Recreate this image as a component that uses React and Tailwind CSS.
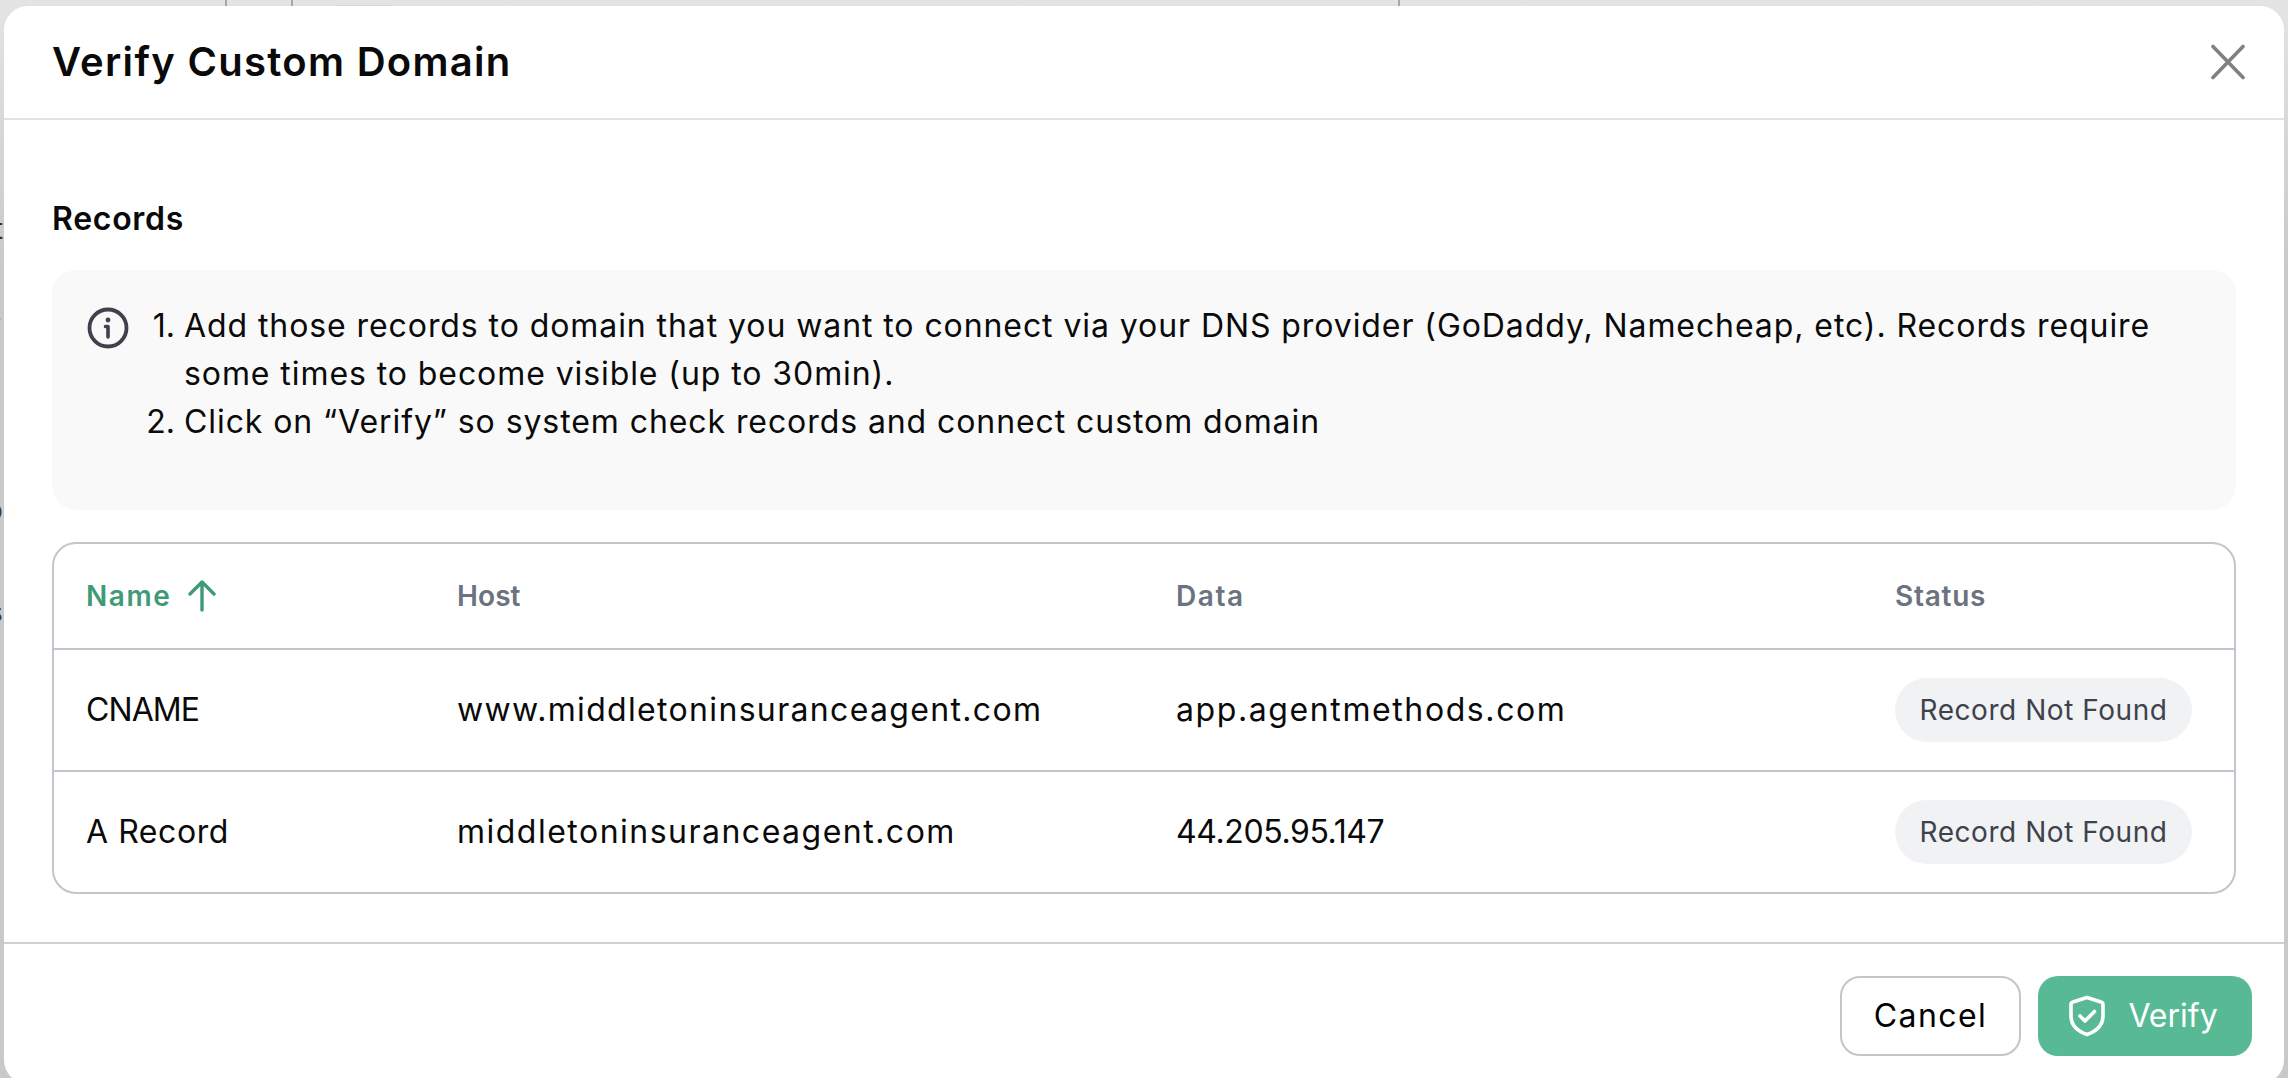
const FONT = "font-['Inter','Noto_Sans',sans-serif]";

const RECORDS = [
    {
        name: "CNAME",
        nameClass: "tracking-[-0.9px]",
        host: "www.middletoninsuranceagent.com",
        hostClass: "tracking-[1.33px]",
        data: "app.agentmethods.com",
        dataClass: "tracking-[1.6px]",
    },
    {
        name: "A Record",
        nameClass: "tracking-[0.55px]",
        host: "middletoninsuranceagent.com",
        hostClass: "tracking-[1.49px]",
        data: "44.205.95.147",
        dataClass: "tracking-[-0.4px]",
    },
];

function CloseIcon() {
    return (
        <svg width="36" height="36" viewBox="0 0 36 36" fill="none" stroke="#808080" strokeWidth="3.6" strokeLinecap="round">
            <path d="M3 2.500 33 33.500M33 2.500 3 33.500" />
        </svg>
    );
}

function InfoIcon() {
    return (
        <svg width="42" height="42" viewBox="0 0 42 42" fill="none" stroke="#3f424d" strokeLinecap="round" strokeLinejoin="round" className="mt-[5px] shrink-0">
            <circle cx="21" cy="21" r="18.500" strokeWidth="3.800" />
            <path d="M18.500 19.500H21V30" strokeWidth="3.600" />
            <circle cx="21" cy="13" r="2.400" fill="#3f424d" stroke="none" />
        </svg>
    );
}

function ArrowUpIcon() {
    return (
        <svg width="28" height="32" viewBox="0 0 28 32" fill="none" stroke="#3f9a75" strokeWidth="3.400" strokeLinecap="round" strokeLinejoin="round">
            <path d="M14 30V2M2 14 14 2l12 12" />
        </svg>
    );
}

function ShieldIcon() {
    return (
        <svg width="38" height="42" viewBox="0 0 38 42" fill="none" stroke="#ffffff" strokeWidth="3.600" strokeLinecap="round" strokeLinejoin="round">
            <path d="M19 2.500 33 7c1.300.4 2 1.400 2 2.700V21c0 9.500-7.500 15.500-16 18.500C10.500 36.500 3 30.500 3 21V9.700c0-1.300.7-2.300 2-2.700L19 2.500Z" />
            <path d="m12 21 5 5 9.500-9.500" />
        </svg>
    );
}

function RecordRow({ record }) {
    return (
        <div className="grid h-[122px] grid-cols-[371px_719px_719px_1fr] items-center pl-8 text-[32px] text-[#0a0a0a] last:h-[120px]">
            <span className={record.nameClass}>{record.name}</span>
            <span className={record.hostClass}>{record.host}</span>
            <span className={record.dataClass}>{record.data}</span>
            <span className="flex h-16 w-[297px] items-center justify-center rounded-full bg-[#f1f2f4] text-[28px] tracking-[0.55px] text-[#3f424d]">
                Record Not Found
            </span>
        </div>
    );
}

export default function App() {
    return (
        <div className={`relative h-screen w-full overflow-hidden bg-linear-to-b from-[#e4e4e4] to-[#c9c9c9] to-[25%] ${FONT}`}>
            {/* bits of the page behind the dialog */}
            <div className="absolute top-0 left-[225px] h-2 w-0.5 bg-[#a8a8a8]" />
            <div className="absolute top-0 left-[291px] h-2 w-0.5 bg-[#a8a8a8]" />
            <div className="absolute top-[5px] left-[330px] h-3 w-[68px] rounded-t-lg bg-[#d6d6d6]" />
            <div className="absolute top-0 left-[1398px] h-2 w-0.5 bg-[#a8a8a8]" />
            <div className="absolute top-0 left-0 h-full w-1 overflow-hidden text-[28px] leading-8 text-[#333]">
                <span className="absolute top-[213px] -left-1.5">t</span>
                <span className="absolute top-[308px] -left-2.5">r</span>
                <span className="absolute top-[494px] -left-3.5">o</span>
                <span className="absolute top-[596px] -left-3">s</span>
            </div>

            <div className="absolute top-1.5 left-1 flex h-[1078px] w-[2280px] flex-col rounded-3xl bg-white">
                <header className="flex h-[114px] shrink-0 items-center justify-between border-b-2 border-[#dfe3e6] pr-[38px] pl-12">
                    <h1 className="text-[40px] font-semibold tracking-[1.3px] text-[#0a0a0a]">Verify Custom Domain</h1>
                    <CloseIcon />
                </header>

                <main className="flex h-[822px] shrink-0 flex-col px-12 pt-[75px]">
                    <h2 className="text-[32px] leading-12 font-semibold tracking-[0.7px] text-[#0a0a0a]">Records</h2>

                    <section className="mt-[27px] flex h-[240px] gap-[14px] rounded-3xl bg-[#f9f9f9] pt-8 pl-[35px]">
                        <InfoIcon />
                        <ol className="text-[32px] leading-12 tracking-[0.92px] text-[#0a0a0a]">
                            <li className="flex">
                                <span className="w-[41px] shrink-0 pr-[9px] text-right tracking-normal">1.</span>
                                <span>
                                    Add those records to domain that you want to connect via your DNS provider (GoDaddy, Namecheap, etc). Records require
                                    <br />
                                    some times to become visible (up to 30min).
                                </span>
                            </li>
                            <li className="flex">
                                <span className="w-[41px] shrink-0 pr-[9px] text-right tracking-normal">2.</span>
                                <span>Click on “Verify” so system check records and connect custom domain</span>
                            </li>
                        </ol>
                    </section>

                    <section className="mt-8 divide-y-2 divide-[#c4c4cc] rounded-3xl border-2 border-[#c4c4cc]">
                        <div className="grid h-[106px] grid-cols-[371px_719px_719px_1fr] items-center pl-8 text-[28px] font-semibold text-[#6b7280]">
                            <span className="flex items-center gap-4 tracking-[1.6px] text-[#3f9a75]">
                                Name
                                <ArrowUpIcon />
                            </span>
                            <span className="tracking-[0.1px]">Host</span>
                            <span className="tracking-[1.6px]">Data</span>
                            <span className="tracking-[0.75px]">Status</span>
                        </div>
                        {RECORDS.map((record) => (
                            <RecordRow key={record.name} record={record} />
                        ))}
                    </section>
                </main>

                <footer className="flex flex-1 justify-end gap-[17px] border-t-2 border-[#cfcfd6] pt-8 pr-8">
                    <button type="button" className="h-20 w-[181px] rounded-[20px] border-2 border-[#c4c4cc] text-[32px] tracking-[1.4px] text-black">
                        Cancel
                    </button>
                    <button type="button" className="flex h-20 w-[214px] items-center justify-center gap-[22px] rounded-[20px] bg-[#57ba94] pr-[4px] text-[32px] text-white">
                        <ShieldIcon />
                        Verify
                    </button>
                </footer>
            </div>
        </div>
    );
}
